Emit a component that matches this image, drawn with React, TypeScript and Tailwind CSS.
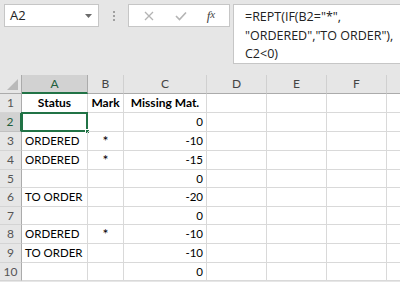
import React from 'react'

type Row = { n: number; h: number; a: string; b: string; c: string }

const cols = [
  { key: 'A', w: 66 },
  { key: 'B', w: 36 },
  { key: 'C', w: 83 },
  { key: 'D', w: 60 },
  { key: 'E', w: 60 },
  { key: 'F', w: 60 },
  { key: 'G', w: 40 },
]

const rows: Row[] = [
  { n: 1, h: 19, a: 'Status', b: 'Mark', c: 'Missing Mat.' },
  { n: 2, h: 19, a: '', b: '', c: '0' },
  { n: 3, h: 19, a: 'ORDERED', b: '*', c: '-10' },
  { n: 4, h: 19, a: 'ORDERED', b: '*', c: '-15' },
  { n: 5, h: 18, a: '', b: '', c: '0' },
  { n: 6, h: 19, a: 'TO ORDER', b: '', c: '-20' },
  { n: 7, h: 18, a: '', b: '', c: '0' },
  { n: 8, h: 19, a: 'ORDERED', b: '*', c: '-10' },
  { n: 9, h: 19, a: 'TO ORDER', b: '', c: '-10' },
  { n: 10, h: 18, a: '', b: '', c: '0' },
]

const cellFont = { fontFamily: '"Lato", "Open Sans", sans-serif' }

const FormulaBar = () => {
  return <div className="flex h-[75px] items-start pt-[4px] pl-[4px]">
    {/* name box */}
    <div className="flex h-[23px] w-[95px] shrink-0 items-center justify-between border border-[#c6c6c6] bg-white pl-[5px] pr-[6px]">
      <span className="text-[13px] text-[#222]" style={{ fontFamily: '"Open Sans", sans-serif' }}>A2</span>
      <svg width="7" height="4" viewBox="0 0 7 4"><polygon points="0,0 7,0 3.5,4" fill="#6b6b6b" /></svg>
    </div>
    {/* separator dots */}
    <div className="flex h-[23px] w-[29px] shrink-0 flex-col items-center justify-center gap-[2px]">
      <span className="h-[2px] w-[2px] bg-[#a0a0a0]" />
      <span className="h-[2px] w-[2px] bg-[#a0a0a0]" />
      <span className="h-[2px] w-[2px] bg-[#a0a0a0]" />
    </div>
    {/* cancel / enter / fx */}
    <div className="flex h-[23px] w-[102px] shrink-0 items-center border border-[#c6c6c6] bg-white">
      <div className="flex w-[38px] justify-center pl-[2px]">
        <svg width="10" height="10" viewBox="0 0 10 10"><path d="M1 1 L9 9 M9 1 L1 9" stroke="#b4b4b4" strokeWidth="1.3" /></svg>
      </div>
      <div className="flex w-[28px] justify-center">
        <svg width="12" height="10" viewBox="0 0 12 10"><path d="M1 5 L4.5 8.5 L11 1.5" stroke="#b4b4b4" strokeWidth="1.6" fill="none" /></svg>
      </div>
      <div className="flex flex-1 justify-center pr-[2px] text-[13px] italic text-[#444]" style={{ fontFamily: '"Liberation Serif", serif' }}>
        f<span className="text-[11px]">x</span>
      </div>
    </div>
    {/* formula text */}
    <div className="ml-[3px] h-[60px] w-[175px] shrink-0 border border-[#c6c6c6] bg-white pl-[11px] pt-[3px] text-[12.5px] leading-[18.5px] text-[#222]" style={{ fontFamily: '"Open Sans", sans-serif' }}>
      <div>=REPT(IF(B2="*",</div>
      <div>"ORDERED","TO ORDER"),</div>
      <div>C2&lt;0)</div>
    </div>
  </div>
}

const Sheet = () => {
  return <div className="bg-white" style={cellFont}>
    {/* column headers */}
    <div className="flex h-[19px] bg-[#e6e6e6]">
      <div className="relative w-[22px] shrink-0 border-r border-b border-[#ababab]">
        <svg className="absolute right-[3px] bottom-[3px]" width="11" height="11" viewBox="0 0 11 11"><polygon points="11,0 11,11 0,11" fill="#b9b9b9" /></svg>
      </div>
      {cols.map(col => (
        <div key={col.key}
          className={col.key === 'A'
            ? 'flex shrink-0 items-center justify-center border-r border-[#ababab] border-b-2 border-b-[#217346] bg-[#d2d2d2] text-[12px] text-[#1f5e3c]'
            : 'flex shrink-0 items-center justify-center border-r border-b border-r-[#d0d0d0] border-b-[#ababab] text-[12px] text-[#444]'}
          style={{ width: col.w }}>
          {col.key === 'G' ? '' : col.key}
        </div>
      ))}
    </div>
    {rows.map(row => (
      <div key={row.n} className="flex" style={{ height: row.h }}>
        <div className={row.n === 2
          ? 'flex w-[22px] shrink-0 items-center justify-center border-r-2 border-r-[#217346] border-b border-b-[#c0c0c0] bg-[#d2d2d2] text-[12px] text-[#1f5e3c]'
          : 'flex w-[22px] shrink-0 items-center justify-center border-r border-b border-r-[#ababab] border-b-[#d4d4d4] bg-[#e6e6e6] text-[12px] text-[#555]'}>
          {row.n}
        </div>
        {cols.map(col => {
          const value = col.key === 'A' ? row.a : col.key === 'B' ? row.b : col.key === 'C' ? row.c : ''
          const header = row.n === 1
          let align = 'justify-start pl-[3px]'
          if (header || col.key === 'B') align = 'justify-center'
          else if (col.key === 'C') align = 'justify-end pr-[3px]'
          let size = 'text-[11.5px]'
          if (header) size = 'text-[12px] font-bold'
          else if (col.key === 'B') size = 'text-[14px] pb-[2px]'
          return <div key={col.key}
            className={`relative flex shrink-0 items-center border-r border-b border-[#d9d9d9] text-black ${align} ${size}`}
            style={{ width: col.w }}>
            {value}
            {row.n === 2 && col.key === 'A' && <>
              <div className="absolute -top-[1px] -left-[1px] -right-[1px] -bottom-[1px] border-2 border-[#217346]" />
              <div className="absolute -right-[3px] -bottom-[3px] h-[5px] w-[5px] border border-white bg-[#217346]" />
            </>}
          </div>
        })}
      </div>
    ))}
  </div>
}

export default function App() {
  return <div className="h-[282px] w-[400px] overflow-hidden bg-[#e6e6e6]">
    <FormulaBar />
    <Sheet />
  </div>
}
